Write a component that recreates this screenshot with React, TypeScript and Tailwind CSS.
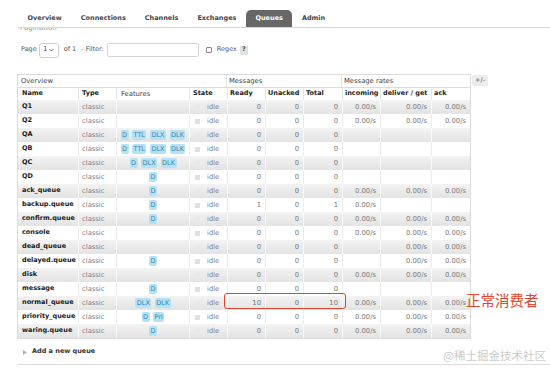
import React from "react";

type Row = {
  name: string;
  features: string[];
  ready: number;
  unacked: number;
  total: number;
  rates: [boolean, boolean, boolean];
};

const ROWS: Row[] = [
  { name: "Q1", features: [], ready: 0, unacked: 0, total: 0, rates: [true, true, true] },
  { name: "Q2", features: [], ready: 0, unacked: 0, total: 0, rates: [true, true, true] },
  { name: "QA", features: ["D", "TTL", "DLX", "DLK"], ready: 0, unacked: 0, total: 0, rates: [false, false, false] },
  { name: "QB", features: ["D", "TTL", "DLX", "DLK"], ready: 0, unacked: 0, total: 0, rates: [false, false, false] },
  { name: "QC", features: ["D", "DLX", "DLK"], ready: 0, unacked: 0, total: 0, rates: [false, false, false] },
  { name: "QD", features: ["D"], ready: 0, unacked: 0, total: 0, rates: [false, false, false] },
  { name: "ack_queue", features: ["D"], ready: 0, unacked: 0, total: 0, rates: [true, true, true] },
  { name: "backup.queue", features: ["D"], ready: 1, unacked: 0, total: 1, rates: [true, false, false] },
  { name: "confirm.queue", features: ["D"], ready: 0, unacked: 0, total: 0, rates: [true, true, true] },
  { name: "console", features: [], ready: 0, unacked: 0, total: 0, rates: [true, true, true] },
  { name: "dead_queue", features: [], ready: 0, unacked: 0, total: 0, rates: [false, true, true] },
  { name: "delayed.queue", features: ["D"], ready: 0, unacked: 0, total: 0, rates: [false, true, true] },
  { name: "disk", features: [], ready: 0, unacked: 0, total: 0, rates: [true, true, true] },
  { name: "message", features: ["D"], ready: 0, unacked: 0, total: 0, rates: [false, false, false] },
  { name: "normal_queue", features: ["DLX", "DLK"], ready: 10, unacked: 0, total: 10, rates: [true, true, true] },
  { name: "priority_queue", features: ["D", "Pri"], ready: 0, unacked: 0, total: 0, rates: [true, true, true] },
  { name: "waring.queue", features: ["D"], ready: 0, unacked: 0, total: 0, rates: [true, true, true] },
];

const TABS = ["Overview", "Connections", "Channels", "Exchanges", "Queues", "Admin"];

const gridCols = "grid grid-cols-[60px_38px_73px_38px_38px_38px_39px_38px_51px_39px]";

function Badge({ label }: { label: string }) {
  return (
    <span className="h-[10px] px-[1.5px] rounded-[2px] bg-[#b5e1f2] text-[#3a86ae] text-[6.5px] leading-[10px]">
      {label}
    </span>
  );
}

function DataRow({ row, odd }: { row: Row; odd: boolean }) {
  const sep = odd ? "border-l border-[#fbfbfb]" : "border-l border-[#ececec]";
  const num = `${sep} flex items-center justify-end pr-[4px] text-[#777]`;
  return (
    <div
      className={`${gridCols} h-[14px] ${
        odd ? "bg-gradient-to-b from-[#f3f3f3] to-[#e3e3e3]" : "bg-white"
      }`}
    >
      <div className="flex items-center pl-[4px] font-bold text-[6.5px] text-[#1a1a1a] whitespace-nowrap">{row.name}</div>
      <div className={`${sep} flex items-center pl-[3px] text-[#808080]`}>classic</div>
      <div className={`${sep} flex items-center justify-center gap-[3.5px]`}>
        {row.features.map((f) => (
          <Badge key={f} label={f} />
        ))}
      </div>
      <div className={`${sep} flex items-center pl-[5px]`}>
        <span className={`w-[5px] h-[5px] ${odd ? "bg-[#e9e9e9]" : "bg-[#e0e0e0]"}`} />
        <span className="ml-[7px] text-[#808080]">idle</span>
      </div>
      <div className={num}>{row.ready}</div>
      <div className={num}>{row.unacked}</div>
      <div className={num}>{row.total}</div>
      <div className={num}>{row.rates[0] ? "0.00/s" : ""}</div>
      <div className={num}>{row.rates[1] ? "0.00/s" : ""}</div>
      <div className={num}>{row.rates[2] ? "0.00/s" : ""}</div>
    </div>
  );
}

export default function App() {
  return (
    <div className="relative w-[550px] h-[370px] overflow-hidden bg-white font-['DejaVu_Sans',sans-serif] text-[6.8px] text-[#444]">
      {/* tabs */}
      <div className="mt-[10px] ml-[18px] flex h-[18px] border-b border-[#d6d6d6]">
        {TABS.map((t) => (
          <div
            key={t}
            className={`flex items-center px-[9.5px] h-[17px] font-bold text-[6.5px] ${
              t === "Queues" ? "bg-[#676767] text-white rounded-t-[5px]" : "text-[#444]"
            }`}
          >
            {t}
          </div>
        ))}
      </div>

      {/* cut pagination label */}
      <div className="ml-[20px] h-[5px] overflow-hidden flex items-end">
        <span className="text-[7px] leading-[9px] text-[#999]">Pagination</span>
      </div>

      {/* page / filter row */}
      <div className="mt-[10px] ml-[21px] h-[14px] flex items-center text-[6.5px] text-[#555]">
        <span>Page</span>
        <span className="ml-[2px] w-[20px] h-[15px] border border-[#cfcfcf] rounded-[3px] flex items-center justify-center gap-[2px] text-[#333]">
          1
          <svg width="5" height="4" viewBox="0 0 5 4">
            <path d="M0.5 1 L2.5 3 L4.5 1" fill="none" stroke="#666" strokeWidth="0.8" />
          </svg>
        </span>
        <span className="ml-[5px]">of 1</span>
        <span className="ml-[5px]">- Filter:</span>
        <span className="ml-[3px] w-[92px] h-[14px] border border-[#d4d4d4] rounded-[2px]" />
        <span className="ml-[7px] w-[6px] h-[6px] border border-[#888] rounded-[1px]" />
        <span className="ml-[5px]">Regex</span>
        <span className="ml-[3px] px-[2px] h-[9px] bg-[#e2e2e2] text-[#555] font-bold flex items-center">?</span>
      </div>

      {/* table */}
      <div className="mt-[17px] ml-[17px] flex items-start">
        <div className="w-[454px] border border-[#dcdcdc]">
          <div className="grid grid-cols-[209px_115px_128px] h-[13px] border-b border-[#dcdcdc] bg-white">
            <div className="flex items-center pl-[3px] border-r border-[#e2e2e2]">Overview</div>
            <div className="flex items-center pl-[2px] border-r border-[#e2e2e2]">Messages</div>
            <div className="flex items-center pl-[2px]">Message rates</div>
          </div>
          <div className={`${gridCols} h-[12px] bg-white font-bold text-[6.5px] text-[#222]`}>
            <div className="flex items-center pl-[4px]">Name</div>
            <div className="flex items-center pl-[3px] border-l border-[#e6e6e6]">Type</div>
            <div className="flex items-center pl-[4px] border-l border-[#e6e6e6] font-normal text-[6.8px] text-[#444]">Features</div>
            <div className="flex items-center pl-[3px] border-l border-[#e6e6e6]">State</div>
            <div className="flex items-center pl-[2px] border-l border-[#e6e6e6]">Ready</div>
            <div className="flex items-center pl-[2px] border-l border-[#e6e6e6]">Unacked</div>
            <div className="flex items-center pl-[2px] border-l border-[#e6e6e6]">Total</div>
            <div className="flex items-center pl-[2px] border-l border-[#e6e6e6]">incoming</div>
            <div className="flex items-center pl-[2px] border-l border-[#e6e6e6]">deliver / get</div>
            <div className="flex items-center pl-[2px] border-l border-[#e6e6e6]">ack</div>
          </div>
          {ROWS.map((r, i) => (
            <DataRow key={r.name} row={r} odd={i % 2 === 0} />
          ))}
        </div>
        <div className="ml-[1px] mt-[1px] w-[16px] h-[11px] bg-[#ececec] flex items-center justify-center text-[6.5px] text-[#555]">
          +/-
        </div>
      </div>

      {/* add a new queue */}
      <div className="mt-[8px] ml-[23px] h-[10px] flex items-center">
        <svg width="4" height="5" viewBox="0 0 4 5">
          <path d="M0 0 L4 2.5 L0 5 Z" fill="#b0b0b0" />
        </svg>
        <span className="ml-[5px] font-bold text-[6.5px] text-[#333]">Add a new queue</span>
      </div>
      <div className="mt-[7px] ml-[18px] border-t border-[#dedede]" />

      {/* annotations */}
      <div className="absolute left-[224px] top-[293px] w-[122px] h-[16px] rounded-[3px] border-[1.5px] border-[#e0452e]" />
      <div className="absolute left-[466px] top-[291px] text-[14.5px] leading-[18px] text-[#e4472f] font-['Noto_Sans_CJK_SC',sans-serif]">
        正常消费者
      </div>
      <div className="absolute left-[443px] top-[348px] text-[11.5px] leading-[15px] text-[#cbcbcb] font-['Noto_Sans_CJK_SC',sans-serif]">
        @稀土掘金技术社区
      </div>
    </div>
  );
}
